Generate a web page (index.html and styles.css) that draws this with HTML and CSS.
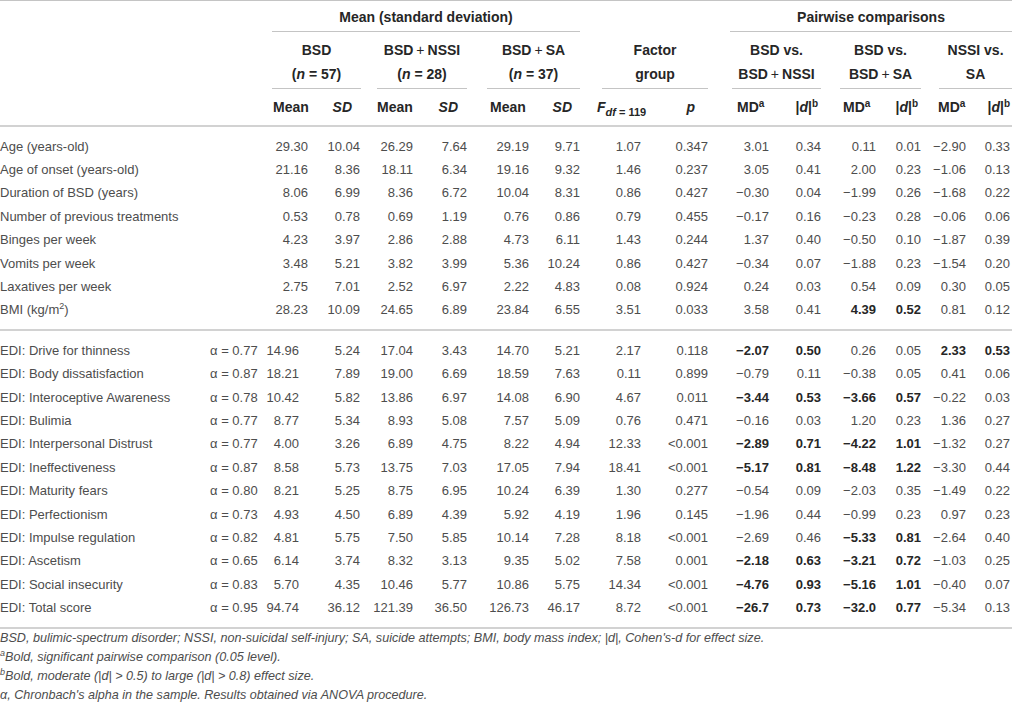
FILE: index.html
```html
<!DOCTYPE html>
<html lang="en">
<head>
<meta charset="utf-8">
<title>Table</title>
<link rel="stylesheet" href="styles.css">
</head>
<body>
<table class="tbl">
  <colgroup>
    <col class="w-label"><col class="w-alpha">
    <col class="w46"><col class="w53"><col class="w52"><col class="w54"><col class="w62"><col class="w51">
    <col class="w61"><col class="w67">
    <col class="w61"><col class="w52"><col class="w55"><col class="w45"><col class="w45"><col class="w46">
  </colgroup>
  <thead>
    <tr class="hr1">
      <th colspan="2"></th>
      <th colspan="6"><div class="grp g-mean">Mean (standard deviation)</div></th>
      <th colspan="2"></th>
      <th colspan="6"><div class="grp g-pair">Pairwise comparisons</div></th>
    </tr>
    <tr class="hr2">
      <th colspan="2"></th>
      <th colspan="2"><div class="sub g-bsd">BSD<br>(<i>n</i> = 57)</div></th>
      <th colspan="2"><div class="sub g-nssi">BSD<span class="pl">+</span>NSSI<br>(<i>n</i> = 28)</div></th>
      <th colspan="2"><div class="sub g-sa">BSD<span class="pl">+</span>SA<br>(<i>n</i> = 37)</div></th>
      <th colspan="2"><div class="sub g-fac">Factor<br>group</div></th>
      <th colspan="2"><div class="sub g-p1">BSD vs.<br>BSD<span class="pl">+</span>NSSI</div></th>
      <th colspan="2"><div class="sub g-p2">BSD vs.<br>BSD<span class="pl">+</span>SA</div></th>
      <th colspan="2"><div class="sub g-p3">NSSI vs.<br>SA</div></th>
    </tr>
    <tr class="hr3">
      <th></th><th></th>
      <th class="h-mean1">Mean</th><th class="h-sd1"><i>SD</i></th>
      <th class="h-mean2">Mean</th><th class="h-sd2"><i>SD</i></th>
      <th class="h-mean3">Mean</th><th class="h-sd3"><i>SD</i></th>
      <th class="h-f"><i>F</i><sub><i>df</i> = 119</sub></th><th class="h-p"><i>p</i></th>
      <th class="h-md1">MD<sup>a</sup></th><th class="h-d1">|<i>d</i>|<sup>b</sup></th>
      <th class="h-md2">MD<sup>a</sup></th><th class="h-d2">|<i>d</i>|<sup>b</sup></th>
      <th class="h-md3">MD<sup>a</sup></th><th class="h-d3">|<i>d</i>|<sup>b</sup></th>
    </tr>
  </thead>
  <tbody class="sec">
    <tr><td>Age (years-old)</td><td></td><td>29.30</td><td>10.04</td><td>26.29</td><td>7.64</td><td>29.19</td><td>9.71</td><td>1.07</td><td>0.347</td><td>3.01</td><td>0.34</td><td>0.11</td><td>0.01</td><td>−2.90</td><td>0.33</td></tr>
    <tr><td>Age of onset (years-old)</td><td></td><td>21.16</td><td>8.36</td><td>18.11</td><td>6.34</td><td>19.16</td><td>9.32</td><td>1.46</td><td>0.237</td><td>3.05</td><td>0.41</td><td>2.00</td><td>0.23</td><td>−1.06</td><td>0.13</td></tr>
    <tr><td>Duration of BSD (years)</td><td></td><td>8.06</td><td>6.99</td><td>8.36</td><td>6.72</td><td>10.04</td><td>8.31</td><td>0.86</td><td>0.427</td><td>−0.30</td><td>0.04</td><td>−1.99</td><td>0.26</td><td>−1.68</td><td>0.22</td></tr>
    <tr><td>Number of previous treatments</td><td></td><td>0.53</td><td>0.78</td><td>0.69</td><td>1.19</td><td>0.76</td><td>0.86</td><td>0.79</td><td>0.455</td><td>−0.17</td><td>0.16</td><td>−0.23</td><td>0.28</td><td>−0.06</td><td>0.06</td></tr>
    <tr><td>Binges per week</td><td></td><td>4.23</td><td>3.97</td><td>2.86</td><td>2.88</td><td>4.73</td><td>6.11</td><td>1.43</td><td>0.244</td><td>1.37</td><td>0.40</td><td>−0.50</td><td>0.10</td><td>−1.87</td><td>0.39</td></tr>
    <tr><td>Vomits per week</td><td></td><td>3.48</td><td>5.21</td><td>3.82</td><td>3.99</td><td>5.36</td><td>10.24</td><td>0.86</td><td>0.427</td><td>−0.34</td><td>0.07</td><td>−1.88</td><td>0.23</td><td>−1.54</td><td>0.20</td></tr>
    <tr><td>Laxatives per week</td><td></td><td>2.75</td><td>7.01</td><td>2.52</td><td>6.97</td><td>2.22</td><td>4.83</td><td>0.08</td><td>0.924</td><td>0.24</td><td>0.03</td><td>0.54</td><td>0.09</td><td>0.30</td><td>0.05</td></tr>
    <tr><td>BMI (kg/m<sup>2</sup>)</td><td></td><td>28.23</td><td>10.09</td><td>24.65</td><td>6.89</td><td>23.84</td><td>6.55</td><td>3.51</td><td>0.033</td><td>3.58</td><td>0.41</td><td class="b">4.39</td><td class="b">0.52</td><td>0.81</td><td>0.12</td></tr>
  </tbody>
  <tbody class="sec edi">
    <tr><td>EDI: Drive for thinness</td><td>α = 0.77</td><td>14.96</td><td>5.24</td><td>17.04</td><td>3.43</td><td>14.70</td><td>5.21</td><td>2.17</td><td>0.118</td><td class="b">−2.07</td><td class="b">0.50</td><td>0.26</td><td>0.05</td><td class="b">2.33</td><td class="b">0.53</td></tr>
    <tr><td>EDI: Body dissatisfaction</td><td>α = 0.87</td><td>18.21</td><td>7.89</td><td>19.00</td><td>6.69</td><td>18.59</td><td>7.63</td><td>0.11</td><td>0.899</td><td>−0.79</td><td>0.11</td><td>−0.38</td><td>0.05</td><td>0.41</td><td>0.06</td></tr>
    <tr><td>EDI: Interoceptive Awareness</td><td>α = 0.78</td><td>10.42</td><td>5.82</td><td>13.86</td><td>6.97</td><td>14.08</td><td>6.90</td><td>4.67</td><td>0.011</td><td class="b">−3.44</td><td class="b">0.53</td><td class="b">−3.66</td><td class="b">0.57</td><td>−0.22</td><td>0.03</td></tr>
    <tr><td>EDI: Bulimia</td><td>α = 0.77</td><td>8.77</td><td>5.34</td><td>8.93</td><td>5.08</td><td>7.57</td><td>5.09</td><td>0.76</td><td>0.471</td><td>−0.16</td><td>0.03</td><td>1.20</td><td>0.23</td><td>1.36</td><td>0.27</td></tr>
    <tr><td>EDI: Interpersonal Distrust</td><td>α = 0.77</td><td>4.00</td><td>3.26</td><td>6.89</td><td>4.75</td><td>8.22</td><td>4.94</td><td>12.33</td><td>&lt;0.001</td><td class="b">−2.89</td><td class="b">0.71</td><td class="b">−4.22</td><td class="b">1.01</td><td>−1.32</td><td>0.27</td></tr>
    <tr><td>EDI: Ineffectiveness</td><td>α = 0.87</td><td>8.58</td><td>5.73</td><td>13.75</td><td>7.03</td><td>17.05</td><td>7.94</td><td>18.41</td><td>&lt;0.001</td><td class="b">−5.17</td><td class="b">0.81</td><td class="b">−8.48</td><td class="b">1.22</td><td>−3.30</td><td>0.44</td></tr>
    <tr><td>EDI: Maturity fears</td><td>α = 0.80</td><td>8.21</td><td>5.25</td><td>8.75</td><td>6.95</td><td>10.24</td><td>6.39</td><td>1.30</td><td>0.277</td><td>−0.54</td><td>0.09</td><td>−2.03</td><td>0.35</td><td>−1.49</td><td>0.22</td></tr>
    <tr><td>EDI: Perfectionism</td><td>α = 0.73</td><td>4.93</td><td>4.50</td><td>6.89</td><td>4.39</td><td>5.92</td><td>4.19</td><td>1.96</td><td>0.145</td><td>−1.96</td><td>0.44</td><td>−0.99</td><td>0.23</td><td>0.97</td><td>0.23</td></tr>
    <tr><td>EDI: Impulse regulation</td><td>α = 0.82</td><td>4.81</td><td>5.75</td><td>7.50</td><td>5.85</td><td>10.14</td><td>7.28</td><td>8.18</td><td>&lt;0.001</td><td>−2.69</td><td>0.46</td><td class="b">−5.33</td><td class="b">0.81</td><td>−2.64</td><td>0.40</td></tr>
    <tr><td>EDI: Ascetism</td><td>α = 0.65</td><td>6.14</td><td>3.74</td><td>8.32</td><td>3.13</td><td>9.35</td><td>5.02</td><td>7.58</td><td>0.001</td><td class="b">−2.18</td><td class="b">0.63</td><td class="b">−3.21</td><td class="b">0.72</td><td>−1.03</td><td>0.25</td></tr>
    <tr><td>EDI: Social insecurity</td><td>α = 0.83</td><td>5.70</td><td>4.35</td><td>10.46</td><td>5.77</td><td>10.86</td><td>5.75</td><td>14.34</td><td>&lt;0.001</td><td class="b">−4.76</td><td class="b">0.93</td><td class="b">−5.16</td><td class="b">1.01</td><td>−0.40</td><td>0.07</td></tr>
    <tr><td>EDI: Total score</td><td>α = 0.95</td><td>94.74</td><td>36.12</td><td>121.39</td><td>36.50</td><td>126.73</td><td>46.17</td><td>8.72</td><td>&lt;0.001</td><td class="b">−26.7</td><td class="b">0.73</td><td class="b">−32.0</td><td class="b">0.77</td><td>−5.34</td><td>0.13</td></tr>
  </tbody>
</table>
<div class="notes">
  <p>BSD, bulimic-spectrum disorder; NSSI, non-suicidal self-injury; SA, suicide attempts; BMI, body mass index; |d|, Cohen's-d for effect size.</p>
  <p><sup>a</sup>Bold, significant pairwise comparison (0.05 level).</p>
  <p><sup>b</sup>Bold, moderate (|d| &gt; 0.5) to large (|d| &gt; 0.8) effect size.</p>
  <p>α, Chronbach's alpha in the sample. Results obtained via ANOVA procedure.</p>
</div>
</body>
</html>
```
FILE: styles.css
```css
html, body {
  margin: 0;
  padding: 0;
  background: #fff;
}
body {
  font-family: "Liberation Sans", Arial, Helvetica, sans-serif;
  font-size: 13px;
  color: #4d4d4d;
}
.tbl {
  width: 1012px;
  table-layout: fixed;
  border-collapse: separate;
  border-spacing: 0;
}
.w-label { width: 205px; }
.w-alpha { width: 57px; }
.w45 { width: 45px; }
.w46 { width: 46px; }
.w51 { width: 51px; }
.w52 { width: 52px; }
.w53 { width: 53px; }
.w54 { width: 54px; }
.w55 { width: 55px; }
.w61 { width: 61px; }
.w62 { width: 62px; }
.w67 { width: 67px; }

th, td {
  padding: 0;
  white-space: nowrap;
}
thead th {
  font-weight: bold;
  font-size: 14px;
  color: #262626;
  vertical-align: top;
}
.hr1 th {
  border-top: 1px solid #c4c4c4;
}
.grp, .sub {
  text-align: center;
  border-bottom: 1px solid #c4c4c4;
}
.grp {
  padding: 4px 0 2px;
  line-height: 24px;
}
.sub {
  padding: 6px 0 2px;
  line-height: 24px;
}
.pl {
  margin: 0 3px;
  font-weight: normal;
  color: #262626;
}
.g-mean { margin-left: 10px; }
.g-pair { margin-left: 22px; }
.g-bsd { margin-left: 10px; }
.g-nssi { margin-left: 16px; }
.g-sa { margin-left: 20px; }
.g-fac { margin-left: 22px; }
.g-p1 { margin-left: 24px; }
.g-p2 { margin-left: 19px; }
.g-p3 { margin-left: 18px; }

.hr3 th {
  line-height: 36px;
  text-align: left;
}
.hr3 sub {
  font-size: 11px;
  line-height: 0;
  vertical-align: -4px;
  font-weight: bold;
}
.hr3 sup {
  font-size: 10px;
  line-height: 0;
  vertical-align: 5px;
}
.h-mean1 { padding-left: 11px; }
.h-mean2 { padding-left: 16px; }
.h-mean3 { padding-left: 23px; }
.h-f { padding-left: 17px; }
.h-md1 { padding-left: 29px; }
.h-md2 { padding-left: 22px; }
.h-md3 { padding-left: 17px; }
.hr3 .h-sd1, .hr3 .h-sd2, .hr3 .h-sd3, .hr3 .h-p,
.hr3 .h-d1, .hr3 .h-d2, .hr3 .h-d3 {
  text-align: right;
}
.h-sd1 { padding-right: 9px; }
.h-sd2 { padding-right: 9px; }
.h-sd3 { padding-right: 8px; }
.h-p { padding-right: 13px; }
.h-d1 { padding-right: 3px; }
.h-d2 { padding-right: 3px; }
.h-d3 { padding-right: 2px; }

.sec td {
  line-height: 23.4px;
  text-align: right;
}
.sec td:first-child {
  text-align: left;
}
.sec td:nth-child(2) {
  text-align: left;
  padding-left: 5px;
}
.sec td:nth-child(4) { padding-right: 1px; }
.sec td:nth-child(16) { padding-right: 2px; }
.edi td:nth-child(3) { padding-right: 9px; }
.sec tr:first-child td {
  border-top: 2px solid #d2d2d2;
  padding-top: 7.5px;
}
.sec tr:last-child td {
  padding-bottom: 7.5px;
}
.edi tr:last-child td {
  border-bottom: 2px solid #d2d2d2;
}
.sec sup {
  font-size: 9px;
  line-height: 0;
  vertical-align: 5px;
}
td.b {
  font-weight: bold;
  color: #262626;
}

.notes {
  font-size: 12.6px;
  font-style: italic;
  color: #4d4d4d;
  line-height: 19px;
}
.notes p {
  margin: 0;
}
.notes sup {
  font-size: 9px;
  line-height: 0;
  vertical-align: 5px;
}
```
